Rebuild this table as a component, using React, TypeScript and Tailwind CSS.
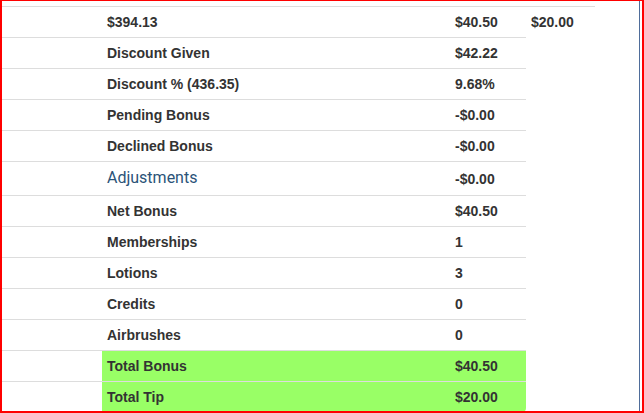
const rows: { label: string; value: string; tall?: boolean; light?: boolean; green?: boolean }[] = [
  { label: "Discount Given", value: "$42.22" },
  { label: "Discount % (436.35)", value: "9.68%" },
  { label: "Pending Bonus", value: "-$0.00" },
  { label: "Declined Bonus", value: "-$0.00" },
  { label: "Adjustments", value: "-$0.00", tall: true, light: true },
  { label: "Net Bonus", value: "$40.50" },
  { label: "Memberships", value: "1" },
  { label: "Lotions", value: "3" },
  { label: "Credits", value: "0" },
  { label: "Airbrushes", value: "0" },
  { label: "Total Bonus", value: "$40.50", green: true },
  { label: "Total Tip", value: "$20.00", green: true },
];

export default function App() {
  return (
    <div className="w-[644px] h-[413px] overflow-hidden bg-white border-t border-l-2 border-r-2 border-b-2 border-[#ff0000] flex font-['Liberation_Sans',Arial,sans-serif] text-[14px] font-bold text-[#333]">
      <div className="w-[638px] h-full border-r border-[#4f6d9a] pt-[5px]">
        {/* first row has an extra tip column */}
        <div className="flex">
          <div className="w-[100px] h-[31px] border-t border-[#ddd]" />
          <div className="w-[348px] h-[31px] border-t border-[#ddd] px-[5px] pt-px flex items-center">$394.13</div>
          <div className="w-[76px] h-[31px] border-t border-[#ddd] px-[5px] pt-px flex items-center">$40.50</div>
          <div className="w-[69px] h-[31px] border-t border-[#ddd] px-[5px] pt-px flex items-center">$20.00</div>
        </div>

        {rows.map((r, i) => (
          <div key={r.label} className="flex">
            <div className={`w-[100px] border-t border-[#ddd] ${r.tall ? "h-[34px]" : "h-[31px]"}`} />
            <div
              className={`w-[348px] border-t border-[#ddd] px-[5px] pt-px flex items-center ${r.tall ? "h-[34px]" : "h-[31px]"} ${r.green ? "bg-[#99ff66]" : ""}`}
            >
              {r.light ? (
                <span className="font-['Roboto',sans-serif] font-normal text-[16px] text-[#2b5378] -mt-[2px]">{r.label}</span>
              ) : (
                r.label
              )}
            </div>
            <div
              className={`w-[76px] border-t border-[#ddd] px-[5px] pt-px flex items-center ${r.tall ? "h-[34px]" : "h-[31px]"} ${r.green ? "bg-[#99ff66]" : ""} ${i === rows.length - 1 ? "rounded-br-[4px]" : ""}`}
            >
              {r.value}
            </div>
          </div>
        ))}
      </div>
    </div>
  );
}
